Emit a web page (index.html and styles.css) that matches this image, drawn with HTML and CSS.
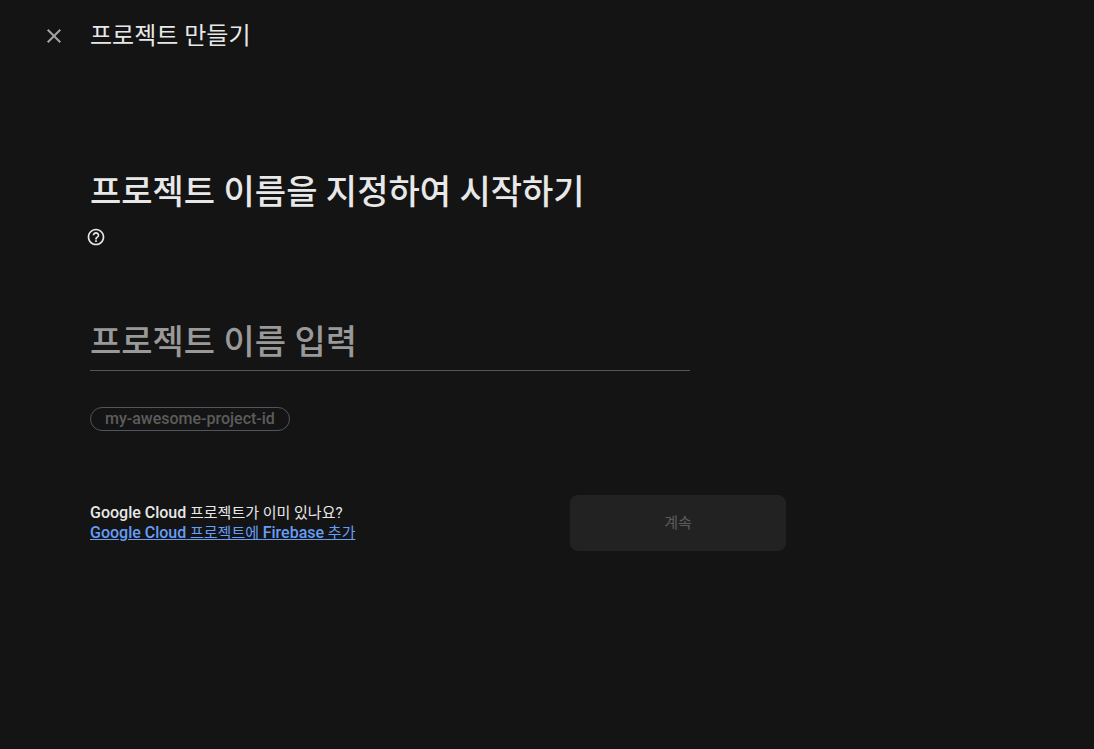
FILE: index.html
```html
<!DOCTYPE html>
<html lang="ko">
<head>
    <meta charset="UTF-8">
    <meta name="viewport" content="width=device-width, initial-scale=1.0">
    <title>프로젝트 만들기</title>
    <link rel="stylesheet" href="styles.css">
</head>
<body>

<header class="topbar">
    <button type="button" class="close-button" aria-label="닫기">
        <svg viewBox="0 0 24 24" width="24" height="24" fill="currentColor">
            <path d="M19 6.41 17.59 5 12 10.59 6.41 5 5 6.41 10.59 12 5 17.59 6.41 19 12 13.41 17.59 19 19 17.59 13.41 12z"/>
        </svg>
    </button>
    <h1 class="topbar-title">프로젝트 만들기</h1>
</header>

<main class="content">
    <h2 class="heading"><label for="projectName">프로젝트 이름을 지정하여 시작하기</label></h2>
    <button type="button" class="help-button" aria-label="도움말">
        <svg viewBox="0 0 24 24" width="20" height="20" fill="currentColor">
            <path d="M11 18h2v-2h-2v2zm1-16C6.48 2 2 6.48 2 12s4.48 10 10 10 10-4.48 10-10S17.52 2 12 2zm0 18c-4.41 0-8-3.59-8-8s3.59-8 8-8 8 3.59 8 8-3.59 8-8 8zm0-14c-2.21 0-4 1.79-4 4h2c0-1.1.9-2 2-2s2 .9 2 2c0 2-3 1.75-3 5h2c0-2.25 3-2.5 3-5 0-2.21-1.79-4-4-4z"/>
        </svg>
    </button>

    <form class="project-form">
        <input type="text" id="projectName" class="name-input" placeholder="프로젝트 이름 입력">
        <button type="button" class="id-chip" disabled>my-awesome-project-id</button>

        <div class="actions">
            <p class="existing">
                <span class="brand">Google Cloud</span> 프로젝트가 이미 있나요?<br>
                <a href="#"><span class="brand">Google Cloud</span> 프로젝트에 <span class="brand">Firebase</span> 추가</a>
            </p>
            <button type="submit" class="continue-button" disabled>계속</button>
        </div>
    </form>
</main>

</body>
</html>
```
FILE: styles.css
```css
* {
    box-sizing: border-box;
}
body {
    margin: 0;
    background-color: #141414;
    color: #e8e8e8;
    font-family: Roboto, "Noto Sans CJK KR", sans-serif;
}
button,
input {
    font-family: inherit;
}
button {
    padding: 0;
    border: none;
    background: none;
    cursor: pointer;
}
svg {
    display: block;
}

/* Top bar */
.topbar {
    display: flex;
    align-items: center;
    gap: 24px;
    height: 72px;
    padding: 0 42px;
}
.close-button {
    color: #a3a3a3;
}
.topbar-title {
    margin: 0;
    font-size: 24px;
    font-weight: 400;
    line-height: 32px;
}

/* Content */
.content {
    max-width: 876px;
    padding: 96px 90px 0;
}
.heading {
    margin: 0;
    font-size: 34px;
    font-weight: 500;
    line-height: 48px;
}
.help-button {
    display: block;
    margin: 11px 0 0 -4px;
    color: #e8e8e8;
}
.project-form {
    display: flex;
    flex-direction: column;
    align-items: flex-start;
    margin-top: 64px;
}
.name-input {
    width: 100%;
    max-width: 600px;
    height: 60px;
    padding: 2px 0 0;
    border: none;
    border-bottom: 1px solid #50545e;
    background: none;
    color: #e8e8e8;
    font-size: 34px;
    font-weight: 500;
    outline: none;
}
.name-input::placeholder {
    color: #999;
}
.id-chip {
    height: 24px;
    margin-top: 36px;
    padding: 0 14px 2px;
    border: 1px solid #50545e;
    border-radius: 12px;
    color: #5c5c5c;
    font-size: 16px;
    font-weight: 500;
}

/* Footer row */
.actions {
    display: flex;
    align-items: center;
    justify-content: space-between;
    width: 100%;
    margin-top: 64px;
}
.existing {
    margin: 0;
    font-size: 15px;
    line-height: 20px;
}
.existing a {
    color: #669df6;
}
.brand {
    font-size: 16px;
    font-weight: 500;
}
.continue-button {
    width: 216px;
    height: 56px;
    padding-bottom: 4px;
    border-radius: 8px;
    background-color: #222;
    color: #5c5c5c;
    font-size: 15px;
}
```
